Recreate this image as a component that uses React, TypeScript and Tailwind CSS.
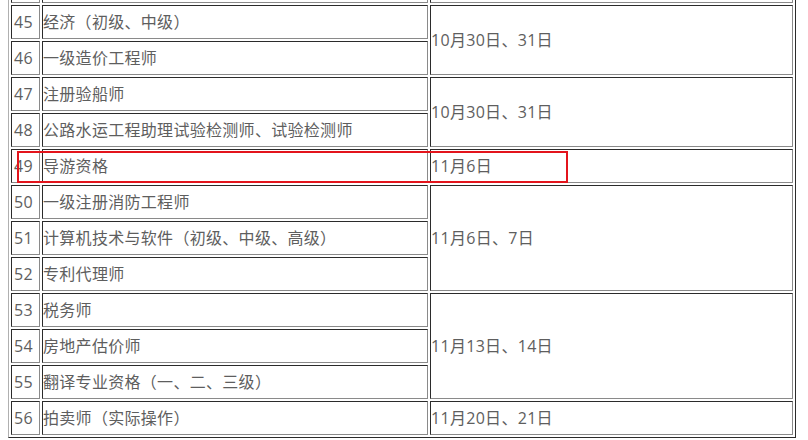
import React from 'react';

interface ExamRow {
  no: number;
  name: string;
  date?: string;
  span?: number;
}

const rows: ExamRow[] = [
  { no: 44, name: '', date: '', span: 1 },
  { no: 45, name: '经济（初级、中级）', date: '10月30日、31日', span: 2 },
  { no: 46, name: '一级造价工程师' },
  { no: 47, name: '注册验船师', date: '10月30日、31日', span: 2 },
  { no: 48, name: '公路水运工程助理试验检测师、试验检测师' },
  { no: 49, name: '导游资格', date: '11月6日', span: 1 },
  { no: 50, name: '一级注册消防工程师', date: '11月6日、7日', span: 3 },
  { no: 51, name: '计算机技术与软件（初级、中级、高级）' },
  { no: 52, name: '专利代理师' },
  { no: 53, name: '税务师', date: '11月13日、14日', span: 3 },
  { no: 54, name: '房地产估价师' },
  { no: 55, name: '翻译专业资格（一、二、三级）' },
  { no: 56, name: '拍卖师（实际操作）', date: '11月20日、21日', span: 1 },
];

// inset cell border, like an old border="1" table
const cell =
  'border border-t-[#2b2b2b] border-l-[#2b2b2b] border-r-[#8a8a8a] border-b-[#8a8a8a] p-0 h-[34px] align-middle text-left';

export default function App() {
  return (
    <div
      className="relative h-[440px] w-[808px] overflow-hidden bg-white text-[16px] tracking-[0.3px] text-[#5e5e5e]"
      style={{ fontFamily: '"Open Sans", "Noto Sans CJK SC", sans-serif' }}
    >
      <div className="pl-2 mt-[-34px]">
        <table className="w-[788px] table-fixed border-separate border-spacing-0.5 border border-t-[#b0b0b0] border-l-[#b0b0b0] border-r-[#2b2b2b] border-b-[#2b2b2b]">
          <colgroup>
            <col className="w-[29px]" />
            <col className="w-[386px]" />
            <col />
          </colgroup>
          <tbody>
            {rows.map((r) => (
              <tr key={r.no}>
                <td className={`${cell} pl-[2px]`}>{r.no === 44 ? '' : r.no}</td>
                <td className={cell}>{r.name}</td>
                {r.span && (
                  <td className={cell} rowSpan={r.span}>
                    {r.date}
                  </td>
                )}
              </tr>
            ))}
          </tbody>
        </table>
      </div>

      {/* highlight box */}
      <div className="pointer-events-none absolute left-[17px] top-[151px] h-[32px] w-[551px] border-2 border-[#e3141c]" />
    </div>
  );
}
